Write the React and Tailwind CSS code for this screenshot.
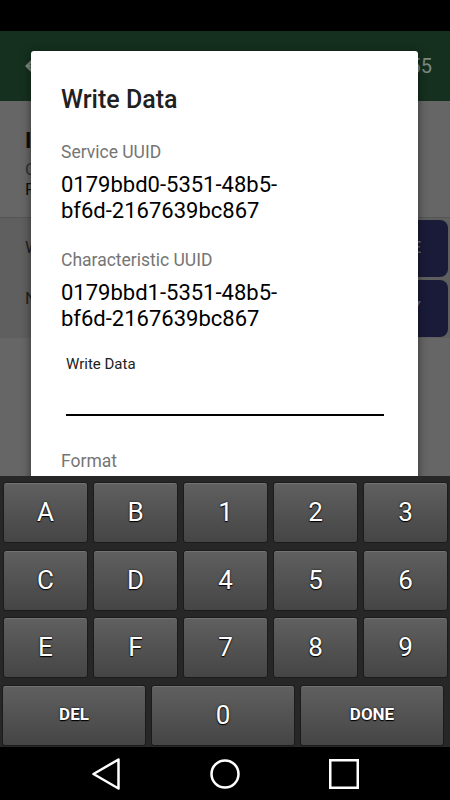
const rows = [
  ['A', 'B', '1', '2', '3'],
  ['C', 'D', '4', '5', '6'],
  ['E', 'F', '7', '8', '9'],
];

const keyCls =
  'flex items-center justify-center h-[61px] rounded-[3px] border border-[#1b1b1b] bg-linear-to-b from-[#606060] to-[#454545] shadow-[inset_0_1px_0_rgba(255,255,255,0.12)] text-white [text-shadow:0_0_2px_#000,0_1px_1px_#000]';

function Key({ label, wide }) {
  const bold = label === 'DEL' || label === 'DONE';
  return (
    <div className={`${keyCls} ${wide ? 'w-[144px]' : ''}`}>
      <span className={bold ? 'text-[17px] font-bold' : 'text-[26px]'}>{label}</span>
    </div>
  );
}

function Keyboard() {
  return (
    <div className="h-[271px] shrink-0 bg-[#272727] pt-[6px] flex flex-col gap-[6.5px]">
      {rows.map((r, i) => (
        <div key={i} className="grid grid-cols-5 gap-[5px] pl-[3px] pr-[2px]">
          {r.map((k) => (
            <Key key={k} label={k} />
          ))}
        </div>
      ))}
      <div className="flex gap-[5px] pl-[2px]">
        <Key label="DEL" wide />
        <Key label="0" wide />
        <Key label="DONE" wide />
      </div>
    </div>
  );
}

function NavBar() {
  return (
    <div className="h-[53px] shrink-0 bg-black flex items-center justify-center gap-[79px]">
      <svg width="40" height="40" viewBox="0 0 40 40" fill="none" stroke="white" strokeWidth="2.5" strokeLinejoin="round">
        <path d="M32.5 5.5 L7.5 20 L32.5 34.5 Z" />
      </svg>
      <svg width="40" height="40" viewBox="0 0 40 40" fill="none" stroke="white" strokeWidth="2.5">
        <circle cx="20" cy="20" r="13.5" />
      </svg>
      <svg width="40" height="40" viewBox="0 0 40 40" fill="none" stroke="white" strokeWidth="2.5">
        <rect x="6.25" y="6.25" width="27.5" height="27.5" />
      </svg>
    </div>
  );
}

function Background() {
  return (
    <div className="flex flex-col h-full bg-[#666666]">
      <div className="h-[70px] shrink-0 bg-[#15301f] flex items-center justify-between pl-[20px] pr-[18px]">
        <svg width="30" height="30" viewBox="0 0 24 24" fill="#7b8a80">
          <path d="M20 11H7.83l5.59-5.59L12 4l-8 8 8 8 1.41-1.41L7.83 13H20v-2z" />
        </svg>
        <span className="text-[20px] text-[#7b8a80]">C4:64:E3:F0:10:55</span>
      </div>
      <div className="h-[116px] shrink-0 pl-[25px] pt-[27px]">
        <div className="text-[22px] leading-[26px] font-bold text-[#0d0d0d]">IoT Sensor</div>
        <div className="text-[17px] leading-[20px] text-[#2f2f2f] mt-[5px]">Connected</div>
        <div className="text-[17px] leading-[20px] text-[#111111]">FF:00:12:34:56:55</div>
      </div>
      <div className="bg-[#5f5f5f] border-t border-[#555555]">
        <div className="h-[60px] flex items-center justify-between pl-[25px] pr-[2px]">
          <span className="text-[17px] text-[#222222]">Write</span>
          <div className="h-[57px] flex items-center px-[27px] rounded-[8px] bg-[#1a1b38] text-[#66667a] text-[17px] font-medium">WRITE</div>
        </div>
        <div className="h-[60px] flex items-center justify-between pl-[25px] pr-[2px]">
          <span className="text-[17px] text-[#222222] -mt-[18px]">Notify</span>
          <div className="h-[57px] flex items-center px-[27px] rounded-[8px] bg-[#1a1b38] text-[#66667a] text-[17px] font-medium">NOTIFY</div>
        </div>
      </div>
    </div>
  );
}

function Dialog() {
  return (
    <div className="absolute left-[31px] top-[20px] w-[387px] h-[520px] bg-white rounded-[3px] shadow-[0_2px_10px_rgba(0,0,0,0.5)] px-[30px] pt-[33.5px]">
      <h2 className="text-[25px] leading-[29px] font-medium text-[#212121]">Write Data</h2>
      <div className="mt-[28.5px] text-[17.5px] leading-[20px] text-[#757575]">Service UUID</div>
      <div className="mt-[10px] text-[22px] leading-[26px] text-black">
        0179bbd0-5351-48b5-
        <br />
        bf6d-2167639bc867
      </div>
      <div className="mt-[26px] text-[17.5px] leading-[20px] text-[#757575]">Characteristic UUID</div>
      <div className="mt-[10px] text-[22px] leading-[26px] text-black">
        0179bbd1-5351-48b5-
        <br />
        bf6d-2167639bc867
      </div>
      <div className="mt-[23px] ml-[5px] mr-[4px]">
        <div className="text-[15px] leading-[18px] text-[#212121]">Write Data</div>
        <div className="h-[41px]" />
        <div className="h-[2px] bg-black" />
      </div>
      <div className="mt-[35px] text-[17.5px] leading-[20px] text-[#757575]">Format</div>
    </div>
  );
}

export default function App() {
  return (
    <div className="w-[450px] h-[800px] flex flex-col bg-black overflow-hidden font-[Roboto,sans-serif]">
      <div className="h-[31px] shrink-0 bg-black" />
      <div className="relative flex-1 overflow-hidden">
        <Background />
        <Dialog />
      </div>
      <Keyboard />
      <NavBar />
    </div>
  );
}
